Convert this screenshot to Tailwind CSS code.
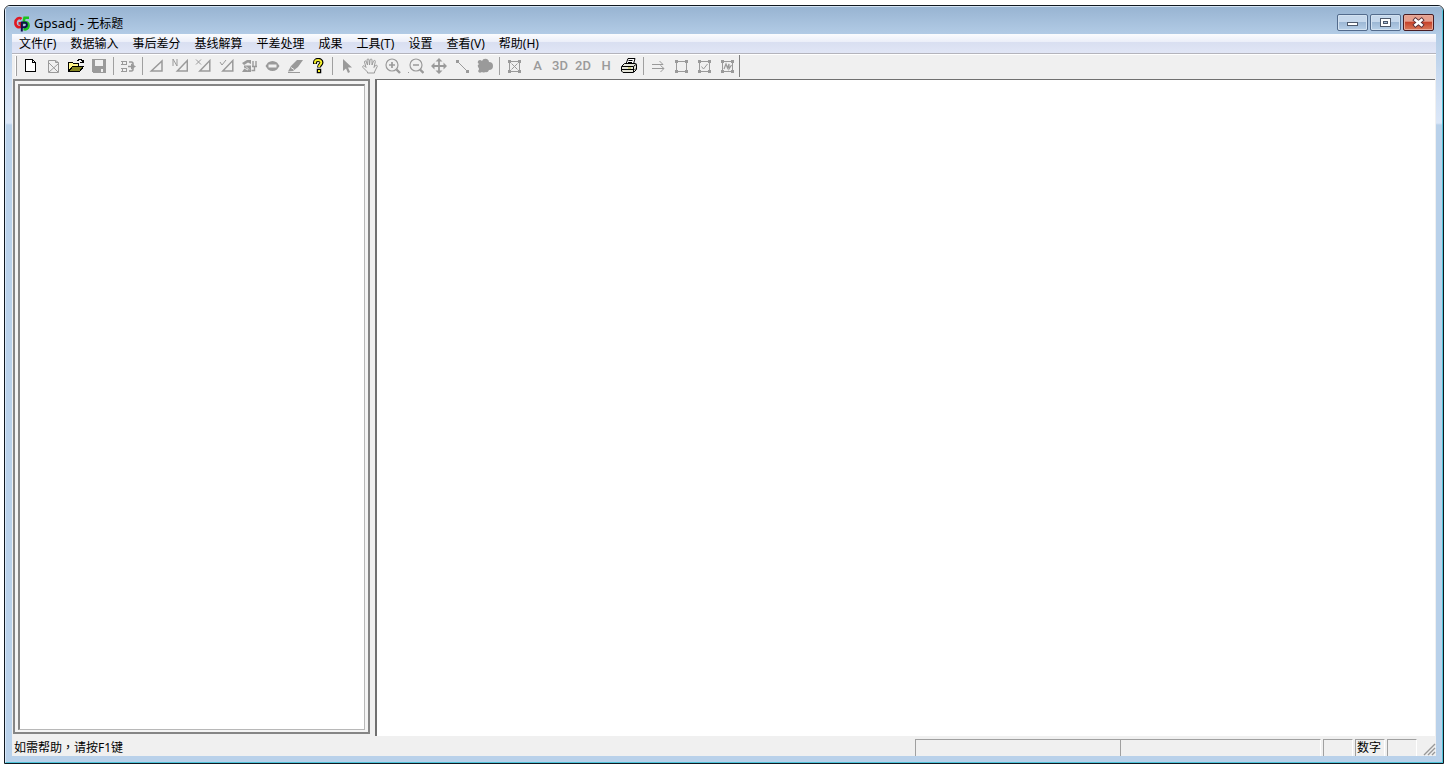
<!DOCTYPE html>
<html lang="zh-CN">
<head>
<meta charset="utf-8">
<title>Gpsadj - 无标题</title>
<script src="https://cdn.jsdelivr.net/npm/@tailwindcss/browser@4"></script>
</head>
<body class="h-screen overflow-hidden bg-white pt-[5px] pr-[3px] pb-[6px] pl-1 font-['Noto_Sans','Noto_Sans_CJK_SC',sans-serif] text-xs text-black">
<div class="flex h-full flex-col overflow-hidden rounded-t-md border border-[#101820] bg-[#b9d1ea]">
<div class="flex min-h-0 flex-1 flex-col border border-t-[#d3e3f3] border-r-[#4fc3d9] border-b-[#4fc3d9] border-l-[#d9e8f8] bg-[linear-gradient(to_bottom,#98b4d2_0px,#b3cce6_28px,#cfdff3_80px,#dbe7f8_116px,#b9d1ea_118px)] px-[6px] pb-[6px]">

  <header class="flex h-[27px] shrink-0 items-start pr-[2px]">
    <div class="flex items-center gap-1 pt-2 pl-[2px]">
      <svg class="size-4" viewBox="0 0 16 16" fill="none" stroke-width="2.600">
        <path d="M7.500 3C5 .6 1.400 3 1.400 6.800s3.400 5.600 6 3.400V7.400H4.500" stroke="#e01822"/>
        <path d="M15 1.800H10.500L9.500 6.800c4-1.400 5.500.6 5 3.800-.4 2.200-2.500 3.200-5 2.500" stroke="#19c41c"/>
        <path d="M7.800 15.500V6.400h2.700c3.200 0 3.200 4.800 0 4.800H8" stroke="#10104e" stroke-width="2"/>
      </svg>
      <h1 class="leading-4"><span class="text-[13px]">Gpsadj - </span>无标题</h1>
    </div>
    <div class="ml-auto flex gap-[2px] pt-[7px]">
      <button aria-label="最小化" class="h-[17px] w-[31px] rounded-[2px] border border-[#536b8c] bg-linear-to-b from-[#c6d8ec] from-45% via-[#9db8d5] via-50% to-[#b8d0e8] shadow-[inset_0_0_0_1px_#d3e2f1]">
        <svg class="mx-auto h-[15px] w-[29px]" viewBox="0 0 29 15" shape-rendering="crispEdges"><rect x="9.500" y="7.500" width="10" height="3" fill="#fff" stroke="#4d596b"/></svg>
      </button>
      <button aria-label="最大化" class="h-[17px] w-[31px] rounded-[2px] border border-[#536b8c] bg-linear-to-b from-[#c6d8ec] from-45% via-[#9db8d5] via-50% to-[#b8d0e8] shadow-[inset_0_0_0_1px_#d3e2f1]">
        <svg class="mx-auto h-[15px] w-[29px]" viewBox="0 0 29 15" shape-rendering="crispEdges"><rect x="9.500" y="3.500" width="10" height="8" fill="#fff" stroke="#4d596b"/><rect x="12.500" y="6.500" width="4" height="2" fill="#a9c1dc" stroke="#4d596b"/></svg>
      </button>
      <button aria-label="关闭" class="h-[17px] w-[31px] rounded-[2px] border border-[#481c22] bg-linear-to-b from-[#e6a08f] from-40% via-[#c7432b] via-50% to-[#d9795a] shadow-[inset_0_0_0_1px_#e7a99a]">
        <svg class="mx-auto h-[15px] w-[29px]" viewBox="0 0 29 15"><path d="m11.500 5 6 5m0-5-6 5" stroke="#5a3038" stroke-width="4.400" stroke-linecap="square"/><path d="m11.500 5 6 5m0-5-6 5" stroke="#fff" stroke-width="2.600" stroke-linecap="square"/></svg>
      </button>
    </div>
  </header>

  <nav class="flex h-[20px] shrink-0 items-center border-b border-[#b4b4bc] bg-[linear-gradient(to_bottom,#fbfcfe,#eceff9_40%,#d9dff1_45%,#e1e6f6)] leading-[18px]">
    <button class="px-[7px]">文件(F)</button>
    <button class="px-[7px]">数据输入</button>
    <button class="px-[7px]">事后差分</button>
    <button class="px-[7px]">基线解算</button>
    <button class="px-[7px]">平差处理</button>
    <button class="px-[7px]">成果</button>
    <button class="px-[7px]">工具(T)</button>
    <button class="px-[7px]">设置</button>
    <button class="px-[7px]">查看(V)</button>
    <button class="px-[7px]">帮助(H)</button>
  </nav>

  <div role="toolbar" aria-label="工具栏" class="flex h-[25px] shrink-0 items-center border-t border-white bg-[#f0f0f0] pb-[2px] text-[#9a9a9a] [&>button]:flex [&>button]:h-[22px] [&>button]:w-[23px] [&>button]:shrink-0 [&>button]:items-center [&>button]:justify-center [&_svg]:size-4 [&_svg]:fill-none [&_svg]:stroke-current">
    <span class="mr-px ml-[3px] h-5 w-[2px] border-r border-[#a0a0a0] bg-white"></span>
    <button aria-label="新建"><svg viewBox="0 0 16 16" shape-rendering="crispEdges"><path d="M3.500 1.500h7l3 3v9h-10z" fill="#fff" stroke="#000"/><path d="M10.500 1.500v3h3" stroke="#000"/></svg></button>
    <button aria-label="关闭项目"><svg viewBox="0 0 16 16"><path d="M3.500 2.500h7l3 2v10h-10zM10.500 2.500v2h3M4 5l9 9M13 6l-9 8"/></svg></button>
    <button aria-label="打开"><svg viewBox="0 0 16 16" shape-rendering="crispEdges"><path d="M.5 12.500v-8h4l1 1h5v3h-6z" fill="#fff68a" stroke="#000"/><path d="M.5 13.500l4-5h11l-4 5z" fill="#858520" stroke="#000"/><path d="M9 2.500h1l1-1h2l2 2m0-2v3h-3" stroke="#000"/></svg></button>
    <button aria-label="保存"><svg viewBox="0 0 16 16" shape-rendering="crispEdges"><path d="M1 1h14v14H2l-1-1z" fill="#9a9a9a" stroke="none"/><path d="M4 2h8v6H4zM10 11h2v3h-2z" fill="#f0f0f0" stroke="none"/></svg></button>
    <span class="mr-[2px] ml-[3px] h-[18px] w-px bg-[#a0a0a0]"></span>
    <button aria-label="数据传输"><svg viewBox="0 0 16 16"><path d="M1 3.500h6M1 6.500h6M1 10.500h6M1 13.500h6M2.500 3v4M6.500 3v4M2.500 10v4M6.500 10v4"/><path d="M9 4h2.500q1.500 0 1.500 2v5q0 2-1.500 2H9M8 8.500h4" stroke-width="1.600"/><path d="M11 5.500l5 3-5 3z" fill="currentColor" stroke="none"/></svg></button>
    <span class="mr-[2px] ml-[3px] h-[18px] w-px bg-[#a0a0a0]"></span>
    <button aria-label="三角形"><svg viewBox="0 0 16 16"><path d="M2.300 13H13V3z" stroke-width="1.500"/></svg></button>
    <button aria-label="N 三角形"><svg viewBox="0 0 16 16"><path d="M5.300 13h10V2.500z" stroke-width="1.500"/><path d="M1 8V1l4 7V1"/></svg></button>
    <button aria-label="X 三角形"><svg viewBox="0 0 16 16"><path d="M4.800 13h10V2.500z" stroke-width="1.500"/><path d="m1 1.500 5 5m0-5-5 5"/></svg></button>
    <button aria-label="勾选三角形"><svg viewBox="0 0 16 16"><path d="M4.800 13h10V2.500z" stroke-width="1.500"/><path d="m2 4 2 3 4-5"/></svg></button>
    <button aria-label="基线处理"><svg viewBox="0 0 16 16"><path d="M1 5l5-3h4v4L7 4.500 3 7zM3 7.500h7V14H1l2-3z" fill="currentColor" stroke="none"/><path d="M3 10l4 2M5 8.500l3 3" stroke="#f0f0f0"/><path d="M12 3v5M15 3v5M11 8.500h5M13.500 9v3.500h-3" stroke-width="1.400"/></svg></button>
    <button aria-label="平差"><svg viewBox="0 0 16 16"><path d="M4 4.500q4.500-3 9 0l2.500 3.500-2.500 3.500q-4.500 3-9 0L1.500 8z" fill="currentColor" stroke="none"/><path d="M4.500 6.500h8v3h-8z" fill="#f0f0f0" stroke="none"/></svg></button>
    <button aria-label="编辑"><svg viewBox="0 0 16 16"><path d="M1 13.500l3-5.500 6-6h6l-5 7-5 4z" fill="currentColor" stroke="none"/><path d="M4 9.500l3 2" stroke="#f0f0f0"/><path d="M1 14.500h12"/></svg></button>
    <button aria-label="帮助"><svg viewBox="0 0 16 16"><path d="M5 6V4.500c0-3.500 6.500-3.500 6.500 0 0 2-2.500 2.500-2.500 5" stroke="#000" stroke-width="4"/><path d="M7.500 11.500h3v3h-3z" fill="#000" stroke="#000" stroke-width="1.500"/><path d="M5 5.500v-1c0-3.300 6.300-3.300 6.300 0 0 2-2.300 2.300-2.300 4.500" stroke="#f4ef2a" stroke-width="2"/><path d="M8 12h2v2H8z" fill="#f4ef2a" stroke="none"/></svg></button>
    <span class="mr-[2px] ml-[3px] h-[18px] w-px bg-[#a0a0a0]"></span>
    <button aria-label="选择"><svg viewBox="0 0 16 16"><path d="M4 1v12l3-2.500 2 4.500 2-1-2-4.500h4z" fill="currentColor" stroke="none"/></svg></button>
    <button aria-label="平移"><svg viewBox="0 0 16 16"><path d="M5.500 15v-1L1 9.500c-1-1.300.5-2.300 1.500-1.500L4 9.500 2.500 4c0-1.500 1.600-1.500 2 0l1 3-.5-5c.2-1.500 1.900-1.500 2 0l.5 5 .5-5c.2-1.300 2-1.300 2 0v5l1.500-4c.7-1.200 2-.7 1.800.7L12 9.500c1.500-3 3.500-2.500 3.300-1.200L12.500 14v1z"/></svg></button>
    <button aria-label="放大"><svg viewBox="0 0 16 16"><circle cx="7" cy="7" r="6" stroke-width="1.200"/><path d="M4 7h6M7 4v6" stroke-width="1.700"/><path d="m11.500 11.500 3.500 3.500" stroke-width="2.400"/></svg></button>
    <button aria-label="缩小"><svg viewBox="0 0 16 16"><circle cx="8" cy="7" r="6" stroke-width="1.200"/><path d="M5 7h6" stroke-width="1.700"/><path d="m12 11.500 3.500 3.500" stroke-width="2.400"/><path d="M0 14.500h1"/></svg></button>
    <button aria-label="移动"><svg viewBox="0 0 16 16"><path d="M8 2v12M2 8h12" stroke-width="1.800"/><path d="M8 0l3.500 3.500h-7zM8 16l3.500-3.500h-7zM0 8l3.500-3.500v7zM16 8l-3.500-3.500v7z" fill="currentColor" stroke="none"/></svg></button>
    <button aria-label="连线"><svg viewBox="0 0 16 16"><path d="M4 4l9 9"/><path d="M2 2h3v3H2zM12 12h3v3h-3z" fill="currentColor" stroke="none"/></svg></button>
    <button aria-label="区域"><svg viewBox="0 0 16 16"><path d="M1 3q2-2 4 0 1-3 5-2 2 1 2 3 4 0 4 4t-4 4q-1 3-4 2-1 1-3 0-3 2-4-1 2-2 0-4-1-2 1-3-2-1-1-3z" fill="currentColor" stroke="none"/></svg></button>
    <span class="mr-[2px] ml-[3px] h-[18px] w-px bg-[#a0a0a0]"></span>
    <button aria-label="全图"><svg viewBox="0 0 16 16"><path d="M3.500 3.500h10v10h-10zM5.500 5.500l6 6M11.500 5.500l-6 6"/><path d="M2 2h3v3H2zM12 2h3v3h-3zM2 12h3v3H2zM12 12h3v3h-3z" fill="currentColor" stroke="none"/></svg></button>
    <button class="pl-[2px] font-[Roboto,sans-serif] text-[13px] font-medium">A</button>
    <button class="pl-px font-[Roboto,sans-serif] text-[13px] font-medium">3D</button>
    <button class="pl-px font-[Roboto,sans-serif] text-[13px] font-medium">2D</button>
    <button class="pl-px font-[Roboto,sans-serif] text-[13px] font-medium">H</button>
    <button aria-label="打印"><svg viewBox="0 0 16 16"><path d="M5 6l2-5.500h7L12.500 6" fill="#fff" stroke="#000"/><path d="M7.500 2.500h4M7 4.500h4" stroke="#000"/><path d="M.5 8.500l3-3h11l1 1v5l-3 3H2l-1.500-1.500z" fill="#e4e4d8" stroke="#000"/><path d="M1 8.500h11.500v5.500M12.500 8.500l3-2.500M1 11.500h11.500" stroke="#000"/><path d="M13.500 12l1.500-1.500" stroke="#000"/><path d="M7 10h3" stroke="#b8b820"/></svg></button>
    <span class="mr-[2px] ml-[3px] h-[18px] w-px bg-[#a0a0a0]"></span>
    <button aria-label="箭头"><svg viewBox="0 0 16 16"><path d="M2 6.500h11M2 10.500h12M9.500 3l3.500 3.500M10.500 14l3.500-3.500-3.500-3"/></svg></button>
    <button aria-label="矩形"><svg viewBox="0 0 16 16"><path d="M3.500 3.500h10v10h-10z"/><path d="M2 2h3v3H2zM12 2h3v3h-3zM2 12h3v3H2zM12 12h3v3h-3z" fill="currentColor" stroke="none"/></svg></button>
    <button aria-label="勾选矩形"><svg viewBox="0 0 16 16"><path d="M3.500 3.500h10v10h-10zM5.500 8.500l2 2.500 4-5"/><path d="M2 2h3v3H2zM12 2h3v3h-3zM2 12h3v3H2zM12 12h3v3h-3z" fill="currentColor" stroke="none"/></svg></button>
    <button aria-label="网形"><svg viewBox="0 0 16 16"><path d="M3.500 3.500h10v10h-10z"/><path d="M5 11l2-5 1.500 4L10 6v5l2.500-4" stroke-width="1.200"/><path d="M2 2h3v3H2zM12 2h3v3h-3zM2 12h3v3H2zM12 12h3v3h-3z" fill="currentColor" stroke="none"/></svg></button>
    <span class="ml-px h-[22px] w-px bg-[#808080]"></span>
  </div>

  <main class="flex min-h-0 flex-1 gap-[5px] bg-[#f0f0f0] pr-px pl-px">
    <aside aria-label="项目" class="mb-[2px] flex w-[357px] shrink-0 border-2 border-[#858585] bg-[#f4f4f4] pt-[3px] pr-[3px] pb-[2px] pl-[3px]">
      <div class="flex-1 border-t-2 border-r border-b border-l-2 border-t-[#858585] border-r-[#b8b8b8] border-b-[#b8b8b8] border-l-[#858585] bg-white"></div>
    </aside>
    <section aria-label="视图" class="flex-1 border-t border-l-2 border-[#707070] bg-white"></section>
  </main>

  <footer class="flex h-[20px] shrink-0 items-end gap-[2px] bg-[#f0f0f0] leading-4">
    <p class="flex-1 pl-[2px]">如需帮助<span lang="zh-TW" class="font-['Noto_Sans_CJK_TC',sans-serif]">，</span>请按F1键</p>
    <span class="-mr-[2px] h-[17px] w-[205px] border-t border-l border-[#a0a0a0]"></span>
    <span class="h-[17px] w-[201px] border-t border-r border-l border-[#a0a0a0] border-r-white"></span>
    <span class="h-[17px] w-[30px] border-t border-r border-l border-[#a0a0a0] border-r-white"></span>
    <span class="h-[17px] w-[30px] border-t border-r border-l border-[#a0a0a0] border-r-white pl-px whitespace-nowrap">数字</span>
    <span class="h-[17px] w-[30px] border-t border-r border-l border-[#a0a0a0] border-r-white"></span>
    <svg class="ml-[4px] size-[13px]" viewBox="0 0 13 13" stroke="#989898" stroke-width="1.400"><path d="M1 12L12 1M5 12l7-7M9 12l3-3"/></svg>
  </footer>
</div>
</div>
</body>
</html>
